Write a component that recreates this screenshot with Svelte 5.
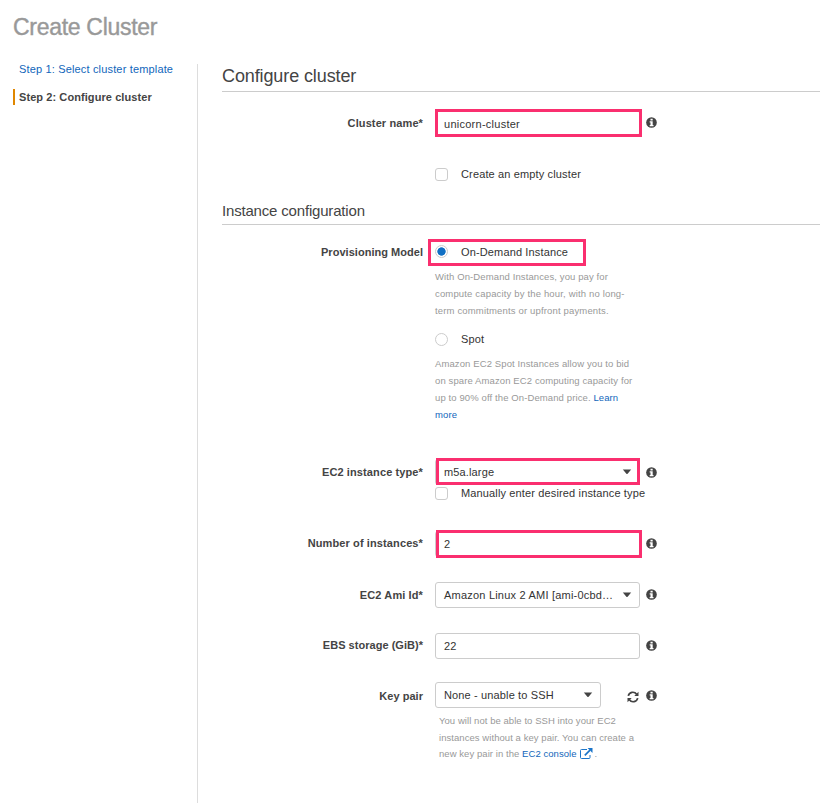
<script>
  const steps = [
    { label: 'Step 1: Select cluster template', active: false },
    { label: 'Step 2: Configure cluster', active: true }
  ];
</script>

{#snippet info()}
  <svg class="info" viewBox="0 0 12 12" width="11" height="11" aria-hidden="true">
    <circle cx="6" cy="6" r="5.8" fill="#444" />
    <path d="M4.900 1.800h2.400v1.900H4.900zM4 4.700h3.300v3.900h.9v1.400H4V8.600h.9V6.100H4z" fill="#fff" />
  </svg>
{/snippet}

{#snippet caret()}
  <svg class="caret" viewBox="0 0 10 6" width="10" height="6" aria-hidden="true">
    <path d="M.8.5h8.400L5.600 4.800q-.6.600-1.200 0z" fill="#444" />
  </svg>
{/snippet}

<div class="page">
  <h1><span>Create Cluster</span></h1>
  <div class="body">
    <nav>
      {#each steps as step}
        <a class:active={step.active}><span>{step.label}</span></a>
      {/each}
    </nav>
    <main>
      <h2><span>Configure cluster</span></h2>

      <div class="row name">
        <div class="label"><span>Cluster name*</span></div>
        <div class="field marked m-name"><span class="t-name">unicorn-cluster</span></div>
        {@render info()}
      </div>

      <div class="choice empty">
        <i class="box"></i><span>Create an empty cluster</span>
      </div>

      <h3><span>Instance configuration</span></h3>

      <div class="row model">
        <div class="label tight"><span>Provisioning Model</span></div>
        <div class="option marked m-model">
          <i class="radio on"></i><span>On-Demand Instance</span>
        </div>
      </div>
      <p class="help demand-help">
        <span>With On-Demand Instances, you pay for</span><br />
        <span class="wide">compute capacity by the hour, with no long-</span><br />
        <span class="wide">term commitments or upfront payments.</span>
      </p>

      <div class="choice spot">
        <i class="radio"></i><span>Spot</span>
      </div>
      <p class="help spot-help">
        <span>Amazon EC2 Spot Instances allow you to bid</span><br />
        <span>on spare Amazon EC2 computing capacity for</span><br />
        <span>up to 90% off the On-Demand price. <a>Learn</a></span><br />
        <a>more</a>
      </p>

      <div class="row type">
        <div class="label"><span>EC2 instance type*</span></div>
        <div class="field marked m-type"><span>m5a.large</span>{@render caret()}</div>
        {@render info()}
      </div>
      <div class="choice manual">
        <i class="box"></i><span>Manually enter desired instance type</span>
      </div>

      <div class="row count">
        <div class="label"><span>Number of instances*</span></div>
        <div class="field marked m-count"><span>2</span></div>
        {@render info()}
      </div>

      <div class="row ami">
        <div class="label"><span>EC2 Ami Id*</span></div>
        <div class="field"><span class="t-ami">Amazon Linux 2 AMI [ami-0cbd…</span>{@render caret()}</div>
        {@render info()}
      </div>

      <div class="row ebs">
        <div class="label tight"><span>EBS storage (GiB)*</span></div>
        <div class="field"><span>22</span></div>
        {@render info()}
      </div>

      <div class="row key">
        <div class="label tight"><span>Key pair</span></div>
        <div class="field short"><span>None - unable to SSH</span>{@render caret()}</div>
        <svg class="refresh" viewBox="0 0 12 12" width="12" height="12" aria-hidden="true">
          <g fill="none" stroke="#444" stroke-width="1.700">
            <path d="M1.300 4.900A4.600 4.600 0 0 1 9.600 3.300" />
            <path d="M10.700 7.100A4.600 4.600 0 0 1 2.400 8.700" />
          </g>
          <path d="M11.500.800v4.200H7.300zM.5 11.200V7h4.200z" fill="#444" />
        </svg>
        {@render info()}
      </div>
      <p class="help key-help">
        <span>You will not be able to SSH into your EC2</span><br />
        <span>instances without a key pair. You can create a</span><br />
        <span class="last">new key pair in the <a>EC2 console</a><svg class="ext" viewBox="0 0 13 11" width="13" height="11" aria-hidden="true">
          <path d="M7 1.500H1.500a1 1 0 0 0-1 1v7a1 1 0 0 0 1 1h7.500a1 1 0 0 0 1-1V7" fill="none" stroke="#1b75c9" />
          <path d="M4.800 7.300 10 2.200" stroke="#1b75c9" stroke-width="1.700" />
          <path d="M7.600 0H12.500v4.900z" fill="#1b75c9" />
        </svg>.</span>
      </p>
    </main>
  </div>
</div>

<style>
  :global(body) { background: #fff; }
  .page {
    width: 820px; height: 803px; overflow: hidden; box-sizing: border-box;
    font: 11px/14px "Liberation Sans", Arial, sans-serif; color: #444;
    display: flex; flex-direction: column;
  }
  h1, h2, h3, p { margin: 0; font-weight: normal; }
  span { white-space: nowrap; }
  h1 {
    height: 64px; box-sizing: border-box; padding: 14px 0 0 13px;
    font-size: 23px; line-height: 27px; letter-spacing: -.3px; color: #999;
    -webkit-text-stroke: .4px #999;
  }
  .body { display: flex; flex: 1; }
  nav { width: 184px; padding-left: 13px; display: flex; flex-direction: column; gap: 12px; }
  nav a {
    flex: none; height: 16px; line-height: 16px; padding-left: 4px;
    border-left: 2px solid transparent; color: #1166bb; letter-spacing: .16px;
  }
  nav a:first-child { margin-top: -3px; }
  nav .active { color: #444; border-color: #e08700; font-weight: bold; letter-spacing: .08px; }
  main { flex: 1; border-left: 1px solid #ddd; padding-left: 24px; display: flex; flex-direction: column; }
  h2 { height: 27px; border-bottom: 1px solid #ccc; font-size: 18px; line-height: 24px; letter-spacing: -.11px; flex: none; }
  h3 { height: 22px; margin-top: 21px; border-bottom: 1px solid #ccc; font-size: 15px; line-height: 18px; letter-spacing: -.18px; flex: none; }
  .row { display: flex; align-items: center; height: 26px; flex: none; }
  .label { width: 201px; margin-right: 12px; text-align: right; font-weight: bold; letter-spacing: .11px; }
  .label.tight { letter-spacing: .03px; }
  .field {
    position: relative; width: 205px; height: 26px; box-sizing: border-box;
    border: 1px solid #ccc; border-radius: 3px; padding: 0 7px 0 8px;
    display: flex; align-items: center; justify-content: space-between; color: #333;
    letter-spacing: .14px;
  }
  .short { width: 166px; }
  .t-name { letter-spacing: .26px; padding-top: 2px; }
  .t-ami { letter-spacing: .21px; }
  .info { margin-left: 5.500px; flex: none; }
  .refresh { margin-left: 26px; flex: none; position: relative; top: 2px; }
  .short ~ .info { margin-left: 6.500px; }
  .marked { position: relative; }
  .marked::after { content: ''; position: absolute; border: 3px solid #fa2f6f; box-sizing: border-box; }
  .m-name::after { left: -1px; top: -2px; width: 207px; height: 28px; }
  .m-model::after { left: -7px; top: 0; width: 158px; height: 27px; }
  .m-type::after { left: 0; top: -2px; width: 204px; height: 27px; }
  .m-count::after { left: 0; top: -2px; width: 206px; height: 28px; }
  .choice, .option { display: flex; align-items: center; color: #333; flex: none; letter-spacing: .14px; }
  .choice { margin-left: 213px; height: 14px; }
  .option { height: 26px; }
  .box, .radio {
    width: 13px; height: 13px; box-sizing: border-box; border: 1px solid #ccc;
    border-radius: 3px; margin-right: 13px; flex: none; background: #fff;
  }
  .radio { border-radius: 50%; }
  .on { background: radial-gradient(circle, #1070c4 3.800px, #fff 4.500px); margin-top: -1px; }
  .help { margin-left: 213px; font-size: 9.500px; line-height: 17px; letter-spacing: .11px; color: #999; flex: none; }
  .help a { color: #1166bb; }
  .wide { letter-spacing: .16px; }
  .name { margin-top: 18px; }
  .empty { margin-top: 31px; }
  .model { margin-top: 14px; }
  .demand-help { margin-top: 3px; }
  .spot { margin-top: 13px; }
  .spot-help { margin-top: 9px; }
  .type { margin-top: 36px; }
  .manual { margin-top: 1px; }
  .count { margin-top: 31px; }
  .ami { margin-top: 25px; }
  .ebs { margin-top: 25px; }
  .key { margin-top: 23px; }
  .name .info, .count .label, .count .info, .ebs .label, .ebs .info, .ami .info { margin-bottom: 2px; }
  .key .label, .key .info { margin-top: 1px; }
  .key-help { margin: 4px 0 0 217px; letter-spacing: .06px; }
  .last { position: relative; top: -1px; }
  .ext { vertical-align: -2px; margin: 0 2px 0 3px; }
</style>
